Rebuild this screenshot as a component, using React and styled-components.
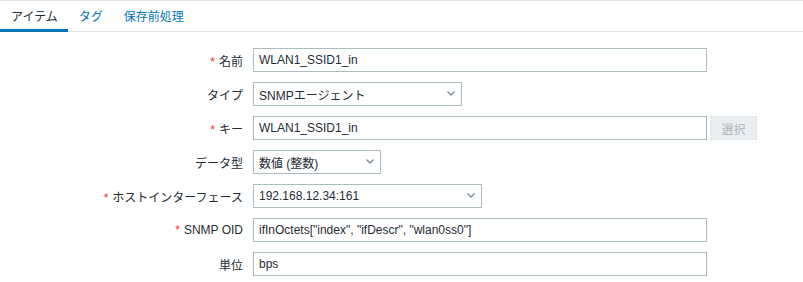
import React from "react";
import styled, { createGlobalStyle } from "styled-components";

const Global = createGlobalStyle`
  html, body { margin: 0; padding: 0; background: #ffffff; }
  body {
    font-family: "Liberation Sans", Arial, "Noto Sans CJK JP", sans-serif;
    font-size: 12px;
    color: #1f2c33;
  }
  * { box-sizing: border-box; }
`;

const Page = styled.div`
  width: 803px;
  min-height: 282px;
  border-top: 1px solid #dfe4e7;
  background: #fff;
`;

const TabBar = styled.nav`
  display: flex;
  height: 31px;
  border-bottom: 1px solid #dfe4e7;
`;

const Tab = styled.a`
  display: flex;
  align-items: center;
  padding: 1px 10px 0 11px;
  height: 31px;
  margin-bottom: -1px;
  font-size: 12px;
  text-decoration: none;
  color: ${(p) => (p.$active ? "#1f2c33" : "#0275b8")};
  border-bottom: 3px solid ${(p) => (p.$active ? "#0275b8" : "transparent")};
  cursor: pointer;
`;

const Form = styled.div`
  display: grid;
  grid-template-columns: 243px 1fr;
  column-gap: 10px;
  row-gap: 10px;
  align-items: center;
  padding-top: 16px;
`;

const Label = styled.label`
  justify-self: end;
  font-size: 12px;
  color: #1f2c33;
  white-space: nowrap;
  &::before {
    content: ${(p) => (p.$required ? "'*'" : "none")};
    color: #e33734;
    margin-right: 4px;
  }
`;

const FieldRow = styled.div`
  display: flex;
  align-items: center;
  gap: 3px;
`;

const TextInput = styled.input`
  width: ${(p) => p.$w}px;
  height: 24px;
  padding: 0 5px;
  border: 1px solid #acbbc2;
  background: #fff;
  font-family: "Liberation Sans", Arial, "Noto Sans CJK JP", sans-serif;
  font-size: 12px;
  color: #1f2c33;
  outline: none;
`;

const Select = styled.div`
  width: ${(p) => p.$w}px;
  height: 24px;
  padding: 0 5px;
  border: 1px solid #acbbc2;
  background: #fff;
  display: flex;
  align-items: center;
  justify-content: space-between;
  font-size: 12px;
  color: #1f2c33;
`;

const Chevron = styled.svg`
  width: 8px;
  height: 5px;
  margin-right: 1px;
  margin-top: -1px;
  flex: none;
`;

const Button = styled.button`
  width: 47px;
  height: 24px;
  border: 1px solid #e4e9eb;
  background: #ebeef0;
  color: #aab6bd;
  font-family: "Liberation Sans", Arial, "Noto Sans CJK JP", sans-serif;
  font-size: 12px;
  padding: 0;
`;

const SelectBox = ({ w, value }) => (
  <Select $w={w}>
    <span>{value}</span>
    <Chevron viewBox="0 0 8 5">
      <path d="M0.5 0.5 L4 4 L7.5 0.5" fill="none" stroke="#768d99" strokeWidth="1.3" />
    </Chevron>
  </Select>
);

export default function App() {
  return (
    <>
      <Global />
      <Page>
        <TabBar>
          <Tab $active>アイテム</Tab>
          <Tab>タグ</Tab>
          <Tab>保存前処理</Tab>
        </TabBar>
        <Form>
          <Label $required>名前</Label>
          <FieldRow>
            <TextInput $w={454} defaultValue="WLAN1_SSID1_in" />
          </FieldRow>

          <Label>タイプ</Label>
          <FieldRow>
            <SelectBox w={209} value="SNMPエージェント" />
          </FieldRow>

          <Label $required>キー</Label>
          <FieldRow>
            <TextInput $w={454} defaultValue="WLAN1_SSID1_in" />
            <Button disabled>選択</Button>
          </FieldRow>

          <Label>データ型</Label>
          <FieldRow>
            <SelectBox w={128} value="数値 (整数)" />
          </FieldRow>

          <Label $required>ホストインターフェース</Label>
          <FieldRow>
            <SelectBox w={229} value="192.168.12.34:161" />
          </FieldRow>

          <Label $required>SNMP OID</Label>
          <FieldRow>
            <TextInput $w={454} defaultValue={'ifInOctets["index", "ifDescr", "wlan0ss0"]'} />
          </FieldRow>

          <Label>単位</Label>
          <FieldRow>
            <TextInput $w={454} defaultValue="bps" />
          </FieldRow>
        </Form>
      </Page>
    </>
  );
}
